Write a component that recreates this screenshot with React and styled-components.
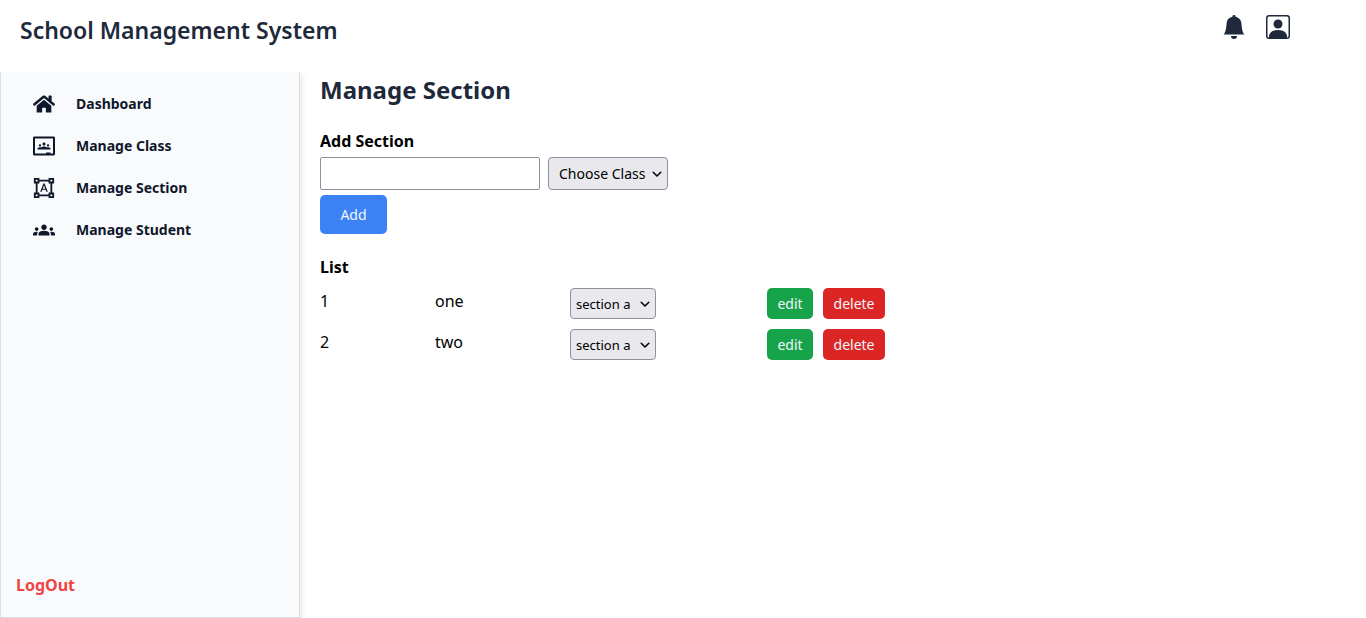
import React from "react";
import styled, { createGlobalStyle } from "styled-components";
import { BsFillBellFill, BsPersonSquare } from "react-icons/bs";
import { FaHome } from "react-icons/fa";
import { SiGoogleclassroom } from "react-icons/si";
import { MdFormatShapes, MdGroups } from "react-icons/md";

const GlobalStyle = createGlobalStyle`
  *, *::before, *::after { box-sizing: border-box; }
  body {
    margin: 0;
    background: #fff;
    color: #000;
    font: 16px/24px "Noto Sans", sans-serif;
  }
  h1, h2, h3 { margin: 0; }
  button, input, select { font-family: inherit; }
`;

const Page = styled.div`
  display: flex;
  flex-direction: column;
  min-height: 100vh;
`;

const Header = styled.header`
  display: flex;
  justify-content: space-between;
  align-items: flex-start;
  height: 72px;
  padding: 15px 76px 0 20px;
  background: #fff;
  color: #1e293b;
`;

const Brand = styled.h1`
  font-size: 23px;
  line-height: 30px;
  font-weight: 600;
`;

const HeaderActions = styled.div`
  display: flex;
  gap: 20px;
`;

const IconButton = styled.button`
  display: flex;
  padding: 0;
  border: 0;
  background: none;
  color: inherit;
  font-size: 24px;
  cursor: pointer;
`;

const Body = styled.div`
  display: flex;
  flex: 1;
`;

const Sidebar = styled.aside`
  display: flex;
  flex-direction: column;
  justify-content: space-between;
  flex: 0 0 300px;
  padding: 11px 15px 20px;
  border: 1px solid #dcdee1;
  border-top: 0;
  background: #f8fafc;
  box-shadow: 2px 2px 5px rgba(0, 0, 0, 0.1);
  clip-path: inset(0 -8px 0 0);
`;

const NavList = styled.ul`
  margin: 0;
  padding: 0 17px;
  list-style: none;
`;

const NavLink = styled.a`
  display: flex;
  align-items: center;
  gap: 21px;
  height: 42px;
  color: #0f172a;
  font-size: 14px;
  font-weight: 700;
  text-decoration: none;

  svg { font-size: 22px; }
`;

const LogOutButton = styled.button`
  align-self: flex-start;
  padding: 0;
  border: 0;
  background: none;
  color: #ef4444;
  font-size: 16px;
  line-height: 24px;
  font-weight: 700;
  cursor: pointer;
`;

const Main = styled.main`
  flex: 1;
  padding: 2px 20px 20px;
`;

const PageTitle = styled.h2`
  color: #1e293b;
  font-size: 24px;
  line-height: 32px;
  font-weight: 700;
`;

const SectionForm = styled.form`
  display: flex;
  flex-direction: column;
  align-items: flex-start;
  padding-top: 23px;
`;

const FormLabel = styled.label`
  font-weight: 700;
  margin-bottom: 4px;
`;

const FieldRow = styled.div`
  display: flex;
  gap: 8px;
  margin-bottom: 5px;
`;

const TextInput = styled.input`
  width: 220px;
  height: 33px;
  padding: 0 8px;
  border: 1px solid #8f8f9d;
  border-radius: 2px;
  background: #fff;
  font-size: 14px;
`;

const SelectBox = styled.span`
  display: inline-block;
  position: relative;
  vertical-align: top;

  svg {
    position: absolute;
    right: 6px;
    top: 50%;
    margin-top: -5px;
    pointer-events: none;
  }
`;

const Select = styled.select`
  appearance: none;
  display: block;
  width: ${(p) => (p.$large ? "120px" : "86px")};
  height: ${(p) => (p.$large ? "33px" : "31px")};
  padding: 0 0 0 ${(p) => (p.$large ? "10px" : "5px")};
  border: 1px solid #8f8f9d;
  border-radius: 4px;
  background: #e9e9ed;
  color: #000;
  font-size: ${(p) => (p.$large ? "14px" : "13px")};
`;

const Button = styled.button`
  width: ${(p) => p.$width}px;
  height: ${(p) => (p.$large ? "39px" : "31px")};
  padding: 0;
  border: 0;
  border-radius: 5px;
  background: ${(p) => p.$color};
  color: #f1f5f9;
  font-size: 14px;
  line-height: 20px;
  cursor: pointer;
`;

const ListTitle = styled.h3`
  margin-top: 21px;
  font-size: 16px;
  line-height: 24px;
  font-weight: 700;
`;

const ListTable = styled.table`
  margin-top: 9px;
  border-collapse: collapse;
  table-layout: fixed;
  width: 565px;
  line-height: 26px;

  td {
    padding: 0 0 10px;
    vertical-align: top;
  }
`;

const Column = styled.col`
  width: ${(p) => p.$width}px;
`;

const RowActions = styled.div`
  display: flex;
  gap: 10px;
`;

const Dropdown = ({ large, options, ...rest }) => (
  <SelectBox>
    <Select $large={large} {...rest}>
      {options.map((o) => (
        <option key={o}>{o}</option>
      ))}
    </Select>
    <svg width="10" height="10" viewBox="0 0 10 10" fill="none" stroke="#000" strokeWidth="1.5" strokeLinecap="round" strokeLinejoin="round" aria-hidden="true">
      <path d="M1.2 3.2 L5 7 L8.8 3.2" />
    </svg>
  </SelectBox>
);

const links = [
  { label: "Dashboard", Icon: FaHome },
  { label: "Manage Class", Icon: SiGoogleclassroom },
  { label: "Manage Section", Icon: MdFormatShapes },
  { label: "Manage Student", Icon: MdGroups },
];

const classes = [
  { id: 1, name: "one" },
  { id: 2, name: "two" },
];

export default function App() {
  return (
    <Page>
      <GlobalStyle />
      <Header>
        <Brand>School Management System</Brand>
        <HeaderActions>
          <IconButton type="button" aria-label="Notifications"><BsFillBellFill /></IconButton>
          <IconButton type="button" aria-label="Profile"><BsPersonSquare /></IconButton>
        </HeaderActions>
      </Header>
      <Body>
        <Sidebar>
          <nav>
            <NavList>
              {links.map(({ label, Icon }) => (
                <li key={label}>
                  <NavLink href="#"><Icon aria-hidden="true" />{label}</NavLink>
                </li>
              ))}
            </NavList>
          </nav>
          <LogOutButton type="button">LogOut</LogOutButton>
        </Sidebar>
        <Main>
          <PageTitle>Manage Section</PageTitle>
          <SectionForm onSubmit={(e) => e.preventDefault()}>
            <FormLabel htmlFor="section-name">Add Section</FormLabel>
            <FieldRow>
              <TextInput id="section-name" type="text" />
              <Dropdown large aria-label="Class" options={["Choose Class", "one", "two"]} />
            </FieldRow>
            <Button $large $width={67} $color="#3b82f6" type="submit">Add</Button>
          </SectionForm>
          <ListTitle>List</ListTitle>
          <ListTable>
            <colgroup>
              <Column $width={115} />
              <Column $width={135} />
              <Column $width={197} />
              <Column $width={118} />
            </colgroup>
            <tbody>
              {classes.map((c) => (
                <tr key={c.id}>
                  <td>{c.id}</td>
                  <td>{c.name}</td>
                  <td><Dropdown aria-label={`Sections of class ${c.name}`} options={["section a"]} /></td>
                  <td>
                    <RowActions>
                      <Button $width={46} $color="#16a34a" type="button">edit</Button>
                      <Button $width={62} $color="#dc2626" type="button">delete</Button>
                    </RowActions>
                  </td>
                </tr>
              ))}
            </tbody>
          </ListTable>
        </Main>
      </Body>
    </Page>
  );
}
